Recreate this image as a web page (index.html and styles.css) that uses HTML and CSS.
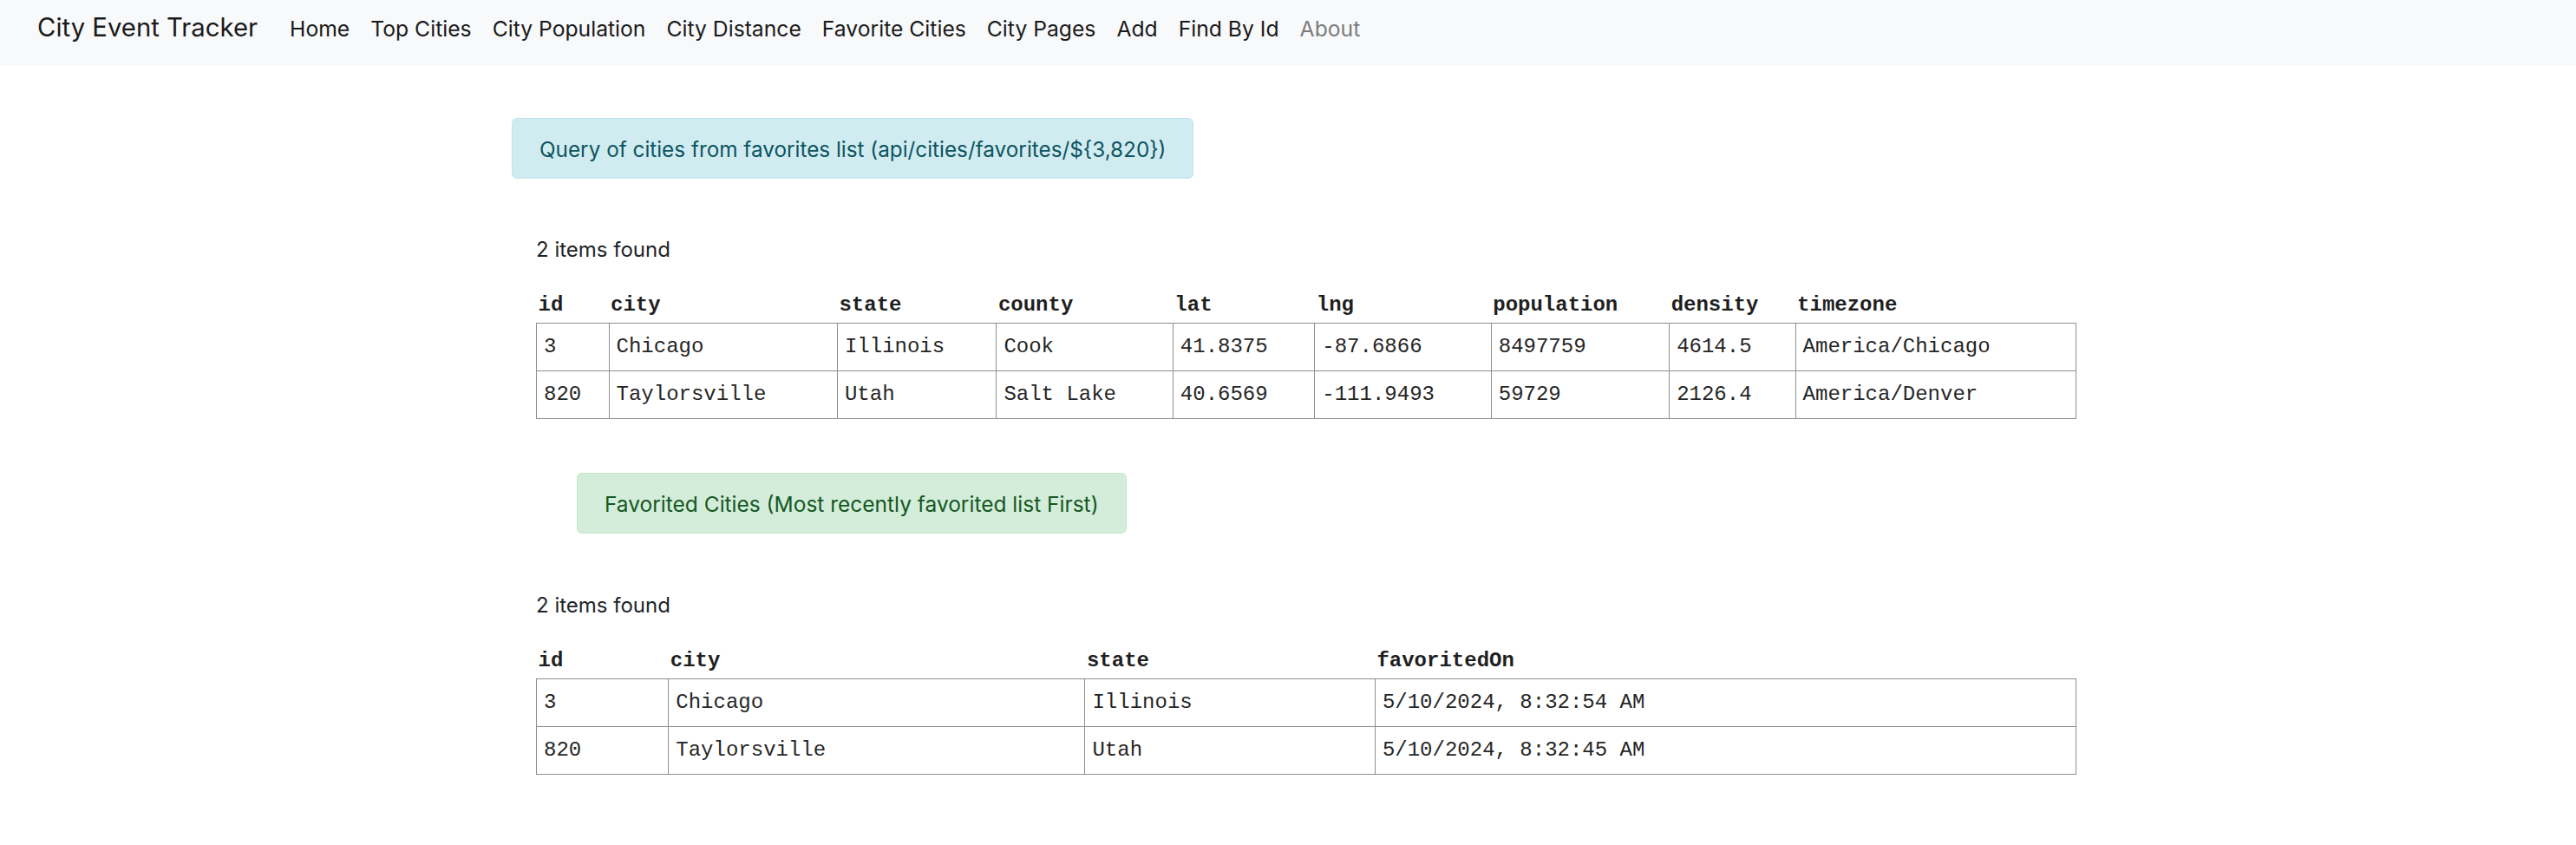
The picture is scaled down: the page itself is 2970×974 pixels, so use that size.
FILE: index.html
```html
<!DOCTYPE html>
<html lang="en">
<head>
<meta charset="utf-8">
<title>City Event Tracker</title>
<link rel="stylesheet" href="styles.css">
</head>
<body>
<nav class="navbar">
  <a class="brand" href="#">City Event Tracker</a>
  <ul class="nav">
    <li><a class="nav-link" href="#">Home</a></li>
    <li><a class="nav-link" href="#">Top Cities</a></li>
    <li><a class="nav-link" href="#">City Population</a></li>
    <li><a class="nav-link" href="#">City Distance</a></li>
    <li><a class="nav-link" href="#">Favorite Cities</a></li>
    <li><a class="nav-link" href="#">City Pages</a></li>
    <li><a class="nav-link" href="#">Add</a></li>
    <li><a class="nav-link" href="#">Find By Id</a></li>
    <li><a class="nav-link muted" href="#">About</a></li>
  </ul>
</nav>

<main class="main">
  <div class="alert alert-info">Query of cities from favorites list (api/cities/favorites/${3,820})</div>

  <section class="results">
    <p class="count">2 items found</p>
    <table class="grid">
      <thead>
        <tr><th>id</th><th>city</th><th>state</th><th>county</th><th>lat</th><th>lng</th><th>population</th><th>density</th><th>timezone</th></tr>
      </thead>
      <tbody>
        <tr><td>3</td><td>Chicago</td><td>Illinois</td><td>Cook</td><td>41.8375</td><td>-87.6866</td><td>8497759</td><td>4614.5</td><td>America/Chicago</td></tr>
        <tr><td>820</td><td>Taylorsville</td><td>Utah</td><td>Salt Lake</td><td>40.6569</td><td>-111.9493</td><td>59729</td><td>2126.4</td><td>America/Denver</td></tr>
      </tbody>
    </table>
  </section>

  <div class="alert alert-success shifted">Favorited Cities (Most recently favorited list First)</div>

  <section class="results">
    <p class="count">2 items found</p>
    <table class="grid">
      <thead>
        <tr><th>id</th><th>city</th><th>state</th><th>favoritedOn</th></tr>
      </thead>
      <tbody>
        <tr><td>3</td><td>Chicago</td><td>Illinois</td><td>5/10/2024, 8:32:54 AM</td></tr>
        <tr><td>820</td><td>Taylorsville</td><td>Utah</td><td>5/10/2024, 8:32:45 AM</td></tr>
      </tbody>
    </table>
  </section>
</main>
</body>
</html>
```
FILE: styles.css
```css
* { box-sizing: border-box; }

html, body {
  margin: 0;
  padding: 0;
  background: #ffffff;
}

body {
  font-family: Inter, "Noto Sans", "Liberation Sans", sans-serif;
  font-size: 24px;
  line-height: 36px;
  color: #212529;
}

a { text-decoration: none; }

.navbar {
  display: flex;
  align-items: baseline;
  height: 76px;
  padding: 12px 24px 0 43px;
  background: #f8f9fa;
}

.brand {
  font-size: 29.3px;
  line-height: 40px;
  color: #1a1a1a;
  margin-right: 25px;
}

.nav {
  display: flex;
  list-style: none;
  margin: 0;
  padding: 0;
}

.nav-link {
  display: block;
  padding: 0 12px;
  font-size: 24.7px;
  line-height: 36px;
  color: #1a1a1a;
}

.nav-link.muted { color: #7b7c7d; }

.main {
  width: 2394px;
  padding: 60px 0 40px 590px;
}

.alert {
  width: fit-content;
  padding: 17px 31px 15px 31px;
  border: 1px solid transparent;
  border-radius: 6px;
  font-size: 24.3px;
  line-height: 36px;
}

.alert-info {
  background: #d1ecf1;
  border-color: #bee5eb;
  color: #0c5460;
}

.alert-success {
  background: #d4edda;
  border-color: #c3e6cb;
  color: #155724;
  font-size: 24.5px;
}

.shifted {
  margin-left: 75px;
  margin-top: 62px;
}

.results {
  padding-left: 28px;
  margin-top: 64px;
}

.shifted + .results {
  margin-top: 65px;
}

.count {
  margin: 0 0 28px 0;
  line-height: 36px;
}

.grid {
  width: 100%;
  border-collapse: collapse;
  font-family: "Courier New", "Liberation Mono", monospace;
  font-size: 24px;
  line-height: 36px;
  color: #262626;
}

.grid th {
  text-align: left;
  font-weight: bold;
  padding: 0 2px 2px 2px;
  color: #1f1f1f;
}

.grid td {
  padding: 9px 8px;
  border: 1px solid #8e8e8e;
  white-space: nowrap;
}
```
